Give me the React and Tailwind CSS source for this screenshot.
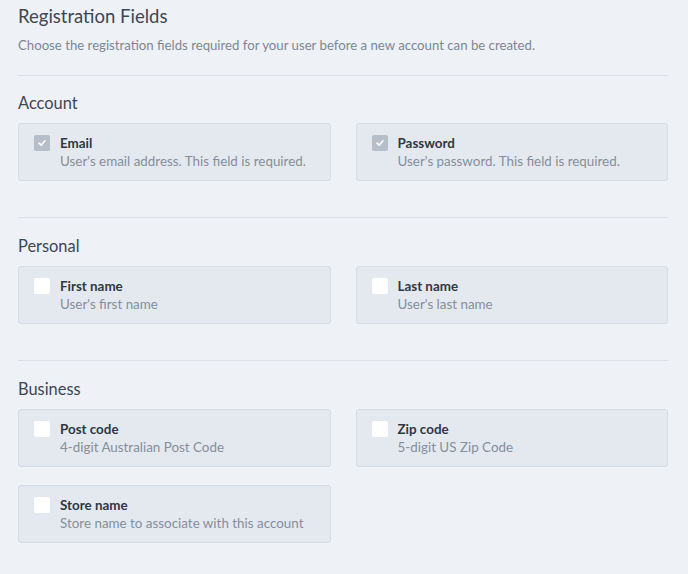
const sections = [
  {
    title: 'Account',
    fields: [
      { label: 'Email', desc: "User's email address. This field is required.", checked: true },
      { label: 'Password', desc: "User's password. This field is required.", checked: true },
    ],
  },
  {
    title: 'Personal',
    fields: [
      { label: 'First name', desc: "User's first name" },
      { label: 'Last name', desc: "User's last name" },
    ],
  },
  {
    title: 'Business',
    fields: [
      { label: 'Post code', desc: '4-digit Australian Post Code' },
      { label: 'Zip code', desc: '5-digit US Zip Code' },
      { label: 'Store name', desc: 'Store name to associate with this account' },
    ],
  },
];

function FieldCard({ label, desc, checked }) {
  return (
    <div className="flex items-start gap-[10px] px-[15px] py-[10px] bg-[#e4e9f0] border border-[#d5dce5] rounded-[3px]">
      {checked ? (
        <div className="w-4 h-4 mt-[1px] rounded-[2px] bg-[#b5bec9] flex items-center justify-center shrink-0">
          <svg width="10" height="10" viewBox="0 0 10 10" fill="none">
            <path d="M2 5.2 L4.1 7.2 L8 2.8" stroke="white" strokeWidth="1.6" strokeLinecap="round" strokeLinejoin="round" />
          </svg>
        </div>
      ) : (
        <div className="w-4 h-4 mt-[1px] rounded-[2px] bg-white shrink-0"></div>
      )}
      <div>
        <div className="text-[13.4px] leading-[18px] font-bold text-[#2f3743]">{label}</div>
        <div className="text-[13.4px] leading-[18px] text-[#858e9a]">{desc}</div>
      </div>
    </div>
  );
}

export default function App() {
  return (
    <div className="min-h-screen flex flex-col bg-[#eef1f6] pl-[18px] pr-[20px] pt-[4px] pb-8 font-['Lato',sans-serif]">
      <h1 className="text-[18.5px] leading-[24px] text-[#3d4654]">Registration Fields</h1>
      <p className="mt-[7px] text-[13.2px] leading-[20px] text-[#7d8794]">
        Choose the registration fields required for your user before a new account can be created.
      </p>

      {sections.map((s, i) => (
        <div key={s.title} className="flex flex-col">
          <div className={`${i === 0 ? 'mt-[20px] mb-[15px]' : 'mt-[36px] mb-[16px]'} border-t border-[#dce1e8]`}></div>
          <h2 className="text-[16.4px] leading-[24px] text-[#3d4654]">{s.title}</h2>
          <div className="mt-[8px] grid grid-cols-2 gap-x-[25px] gap-y-[18px]">
            {s.fields.map((f) => (
              <FieldCard key={f.label} {...f} />
            ))}
          </div>
        </div>
      ))}
    </div>
  );
}
